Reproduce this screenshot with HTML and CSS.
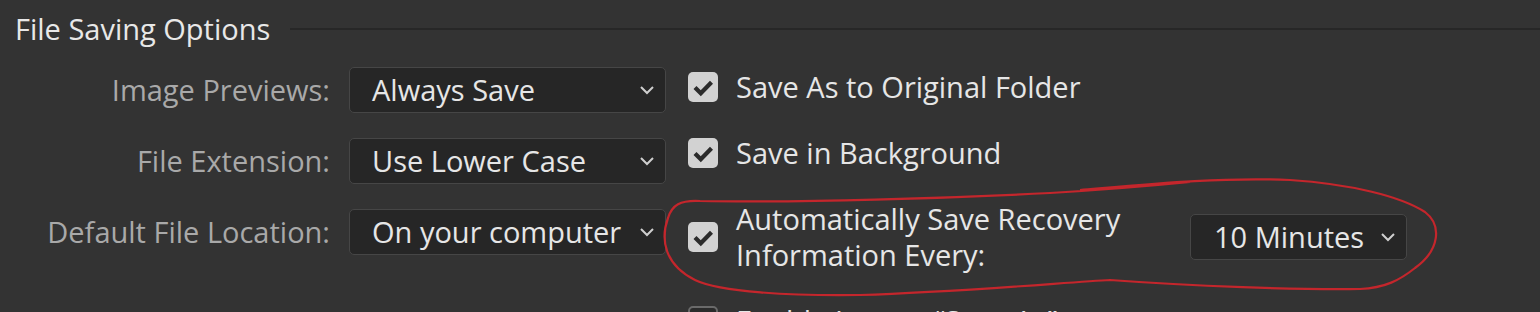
FILE: index.html
```html
<!DOCTYPE html>
<html>
<head>
	<link rel="stylesheet" href="styles.css">
</head>
<body>
	<div class="prefs">
		<div class="section-head">
			<h1>File Saving Options</h1>
			<span class="rule"></span>
		</div>
		<div class="section-body">
			<div class="fields">
				<div class="field">
					<label>Image Previews:</label>
					<div class="select"><span>Always Save</span><svg class="chev" viewBox="0 0 16 10"><polyline points="2,2 8,8 14,2"/></svg></div>
				</div>
				<div class="field">
					<label>File Extension:</label>
					<div class="select"><span>Use Lower Case</span><svg class="chev" viewBox="0 0 16 10"><polyline points="2,2 8,8 14,2"/></svg></div>
				</div>
				<div class="field">
					<label>Default File Location:</label>
					<div class="select"><span>On your computer</span><svg class="chev" viewBox="0 0 16 10"><polyline points="2,2 8,8 14,2"/></svg></div>
				</div>
			</div>
			<div class="options">
				<div class="option">
					<span class="check on"><svg viewBox="0 0 30 30"><polyline points="7,15.5 12.8,21.3 23.5,10.3"/></svg></span>
					<span>Save As to Original Folder</span>
				</div>
				<div class="option">
					<span class="check on"><svg viewBox="0 0 30 30"><polyline points="7,15.5 12.8,21.3 23.5,10.3"/></svg></span>
					<span>Save in Background</span>
				</div>
				<div class="option">
					<span class="check on"><svg viewBox="0 0 30 30"><polyline points="7,15.5 12.8,21.3 23.5,10.3"/></svg></span>
					<span class="recovery-text">Automatically Save Recovery<br>Information Every:</span>
					<div class="select small"><span>10 Minutes</span><svg class="chev" viewBox="0 0 16 10"><polyline points="2,2 8,8 14,2"/></svg></div>
				</div>
				<div class="option">
					<span class="check"></span>
					<span>Enable Legacy &ldquo;Save As&rdquo;</span>
				</div>
			</div>
		</div>
		<!-- hand drawn red mark round the recovery option -->
		<svg class="annotation" viewBox="0 0 1540 312">
			<path d="M 1080 190 C 1150 184, 1220 177, 1290 180 C 1350 184, 1400 196, 1425 212 C 1442 225, 1440 250, 1415 268 C 1400 280, 1385 288, 1360 289 C 1300 290, 1190 286, 1110 280 C 1070 282, 960 292, 860 295 C 790 296, 720 292, 695 280 C 665 265, 660 240, 668 218 C 672 205, 680 200, 700 201 C 800 203, 950 198, 1050 193 C 1100 190, 1150 186, 1190 182"/>
		</svg>
	</div>
</body>
</html>
```

FILE: styles.css
```css
html, body {
	margin: 0;
	padding: 0;
	height: 100%;
	overflow: hidden;
	background-color: #333;
}
body {
	font-family: "Open Sans", "Noto Sans", sans-serif;
	font-size: 29px;
	line-height: 36px;
	color: #e6e6e6;
}
.prefs {
	position: relative;
	height: 100%;
}
.section-head {
	display: flex;
	align-items: center;
	gap: 20px;
	padding: 11px 0 0 15px;
}
.section-head h1 {
	margin: 0;
	font-size: 29px;
	font-weight: normal;
	color: #e8e8e8;
}
.section-head .rule {
	flex: 1;
	border-top: 2px solid #272727;
}
.section-body {
	display: flex;
	padding-top: 20px;
}
.fields {
	display: flex;
	flex-direction: column;
	gap: 25px;
}
.field {
	display: flex;
	align-items: center;
	gap: 19px;
}
.field label {
	width: 330px;
	text-align: right;
	color: #a9a9a9;
}
.select {
	box-sizing: border-box;
	width: 317px;
	height: 46px;
	display: flex;
	align-items: center;
	justify-content: space-between;
	padding: 0 10px 0 22px;
	background-color: #262626;
	border: 1px solid #464646;
	border-radius: 5px;
	color: #e6e6e6;
}
.select.small {
	width: 217px;
	padding-left: 23px;
}
.chev {
	width: 16px;
	height: 10px;
	fill: none;
	stroke: #cfcfcf;
	stroke-width: 2;
}
.options {
	display: flex;
	flex-direction: column;
	gap: 30px;
	padding-top: 2px;
	margin-left: 22px;
}
.option {
	display: flex;
	align-items: center;
}
.check {
	box-sizing: border-box;
	width: 30px;
	height: 30px;
	margin-right: 18px;
	border-radius: 5px;
	border: 2px solid #6a6a6a;
	background-color: #2b2b2b;
	flex-shrink: 0;
}
.check.on {
	border: none;
	background-color: #d2d2d2;
}
.check svg {
	display: block;
	width: 30px;
	height: 30px;
	fill: none;
	stroke: #2b2b2b;
	stroke-width: 4.2;
}
.recovery-text {
	width: 454px;
}
.annotation {
	position: absolute;
	left: 0;
	top: 0;
	width: 1540px;
	height: 312px;
	pointer-events: none;
	fill: none;
	stroke: #c4262c;
	stroke-width: 2.2;
}
```
